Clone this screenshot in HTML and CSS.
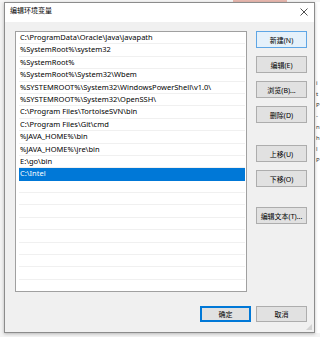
FILE: index.html
```html
<!DOCTYPE html>
<html>
<head>
<meta charset="utf-8">
<link rel="stylesheet" href="styles.css">
</head>
<body>
<div class="desk">
  <div class="topstrip"><span class="pink"></span></div>
  <div class="stage">
    <div class="leftstrip"></div>
    <div class="dialog">
      <div class="titlebar">
        <span class="title">编辑环境变量</span>
        <svg class="close" width="8" height="8" viewBox="0 0 8 8"><path d="M0.5 0.5 L7.5 7.5 M7.5 0.5 L0.5 7.5" stroke="#222" stroke-width="0.8" fill="none"/></svg>
      </div>
      <div class="body">
        <div class="main">
          <div class="list">
            <div class="row">C:\ProgramData\Oracle\Java\javapath</div>
            <div class="row">%SystemRoot%\system32</div>
            <div class="row">%SystemRoot%</div>
            <div class="row">%SystemRoot%\System32\Wbem</div>
            <div class="row">%SYSTEMROOT%\System32\WindowsPowerShell\v1.0\</div>
            <div class="row">%SYSTEMROOT%\System32\OpenSSH\</div>
            <div class="row">C:\Program Files\TortoiseSVN\bin</div>
            <div class="row">C:\Program Files\Git\cmd</div>
            <div class="row">%JAVA_HOME%\bin</div>
            <div class="row">%JAVA_HOME%\jre\bin</div>
            <div class="row">E:\go\bin</div>
            <div class="row sel">C:\Intel</div>
            <div class="row"></div>
            <div class="row"></div>
            <div class="row"></div>
            <div class="row"></div>
            <div class="row"></div>
            <div class="row"></div>
            <div class="row"></div>
            <div class="row"></div>
            <div class="row"></div>
          </div>
          <div class="side">
            <div class="btn hot">新建(N)</div>
            <div class="btn">编辑(E)</div>
            <div class="btn">浏览(B)...</div>
            <div class="btn">删除(D)</div>
            <div class="btn gap1">上移(U)</div>
            <div class="btn">下移(O)</div>
            <div class="btn gap2">编辑文本(T)...</div>
          </div>
        </div>
        <div class="foot">
          <div class="btn def">确定</div>
          <div class="btn">取消</div>
        </div>
      </div>
      <span class="grip"></span>
    </div>
    <div class="rightstrip">
      <span>i</span><span>t</span><span>P</span><span>-</span><span>n</span><span>h</span><span>l</span><span>P</span>
    </div>
  </div>
</div>
</body>
</html>
```

FILE: styles.css
```css
html, body {
  margin: 0;
  padding: 0;
  width: 320px;
  height: 337px;
  overflow: hidden;
  background: #f3f3f3;
  font-family: "Noto Sans", "Noto Sans CJK SC", sans-serif;
}
.desk {
  display: flex;
  flex-direction: column;
  width: 320px;
  height: 337px;
}
.topstrip {
  height: 2px;
  position: relative;
  background: #f5f5f5;
}
.pink {
  position: absolute;
  left: 233px;
  top: 0;
  width: 54px;
  height: 2px;
  background: #e7b7ae;
}
.stage {
  display: flex;
  height: 331px;
}
.leftstrip {
  width: 4px;
  background: #f2f2f2;
}
.dialog {
  position: relative;
  width: 311px;
  height: 331px;
  box-sizing: border-box;
  border: 1px solid #8c8c8c;
  background: #f0f0f0;
  display: flex;
  flex-direction: column;
  box-shadow: 0 1px 3px rgba(0,0,0,0.25);
}
.titlebar {
  height: 19px;
  box-sizing: border-box;
  background: #ffffff;
  display: flex;
  align-items: flex-start;
  justify-content: space-between;
  padding: 3px 6px 0 5px;
}
.title {
  font-size: 7px;
  line-height: 9px;
  color: #000;
}
.close {
  display: block;
  margin-top: 2px;
}
.body {
  flex: 1;
  display: flex;
  flex-direction: column;
  padding: 9px 7px 0 10px;
}
.main {
  display: flex;
  gap: 9px;
}
.list {
  width: 232px;
  height: 261px;
  box-sizing: border-box;
  border: 1px solid #a0a0a0;
  background: #fff;
  padding: 0 1px 0 3px;
  overflow: hidden;
}
.row {
  height: 12.4px;
  box-sizing: border-box;
  border-bottom: 1px solid #f0f0f0;
  font-size: 7.5px;
  line-height: 11.4px;
  padding-left: 1px;
  color: #000;
  white-space: nowrap;
}
.row.sel {
  background: #0078d7;
  color: #fff;
  border-bottom-color: #0078d7;
}
.side {
  display: flex;
  flex-direction: column;
  gap: 8px;
}
.btn {
  width: 51px;
  height: 17px;
  box-sizing: border-box;
  border: 1px solid #adadad;
  background: #e1e1e1;
  font-size: 7px;
  color: #000;
  display: flex;
  align-items: center;
  justify-content: center;
  white-space: nowrap;
}
.btn.hot {
  border-color: #5fa6e5;
  background: #e5f1fb;
}
.btn.gap1 { margin-top: 14px; }
.btn.gap2 { margin-top: 12px; }
.foot {
  display: flex;
  justify-content: flex-end;
  gap: 5px;
  margin-top: 14px;
}
.foot .btn {
  height: 16px;
}
.btn.def {
  border: 1px solid #0078d7;
  box-shadow: inset 0 0 0 1px #0078d7;
}
.grip {
  position: absolute;
  right: 2px;
  bottom: 2px;
  width: 6px;
  height: 6px;
  background: radial-gradient(circle, #b0b0b0 0.6px, transparent 0.8px) 0 0 / 2px 2px;
  clip-path: polygon(100% 0, 100% 100%, 0 100%);
}
.rightstrip {
  flex: 1;
  background: #ffffff;
  display: flex;
  flex-direction: column;
  padding-top: 76px;
  font-size: 6px;
  line-height: 11px;
  color: #333;
  overflow: hidden;
  white-space: nowrap;
}
.rightstrip span { display: block; padding-left: 1px; }
```
